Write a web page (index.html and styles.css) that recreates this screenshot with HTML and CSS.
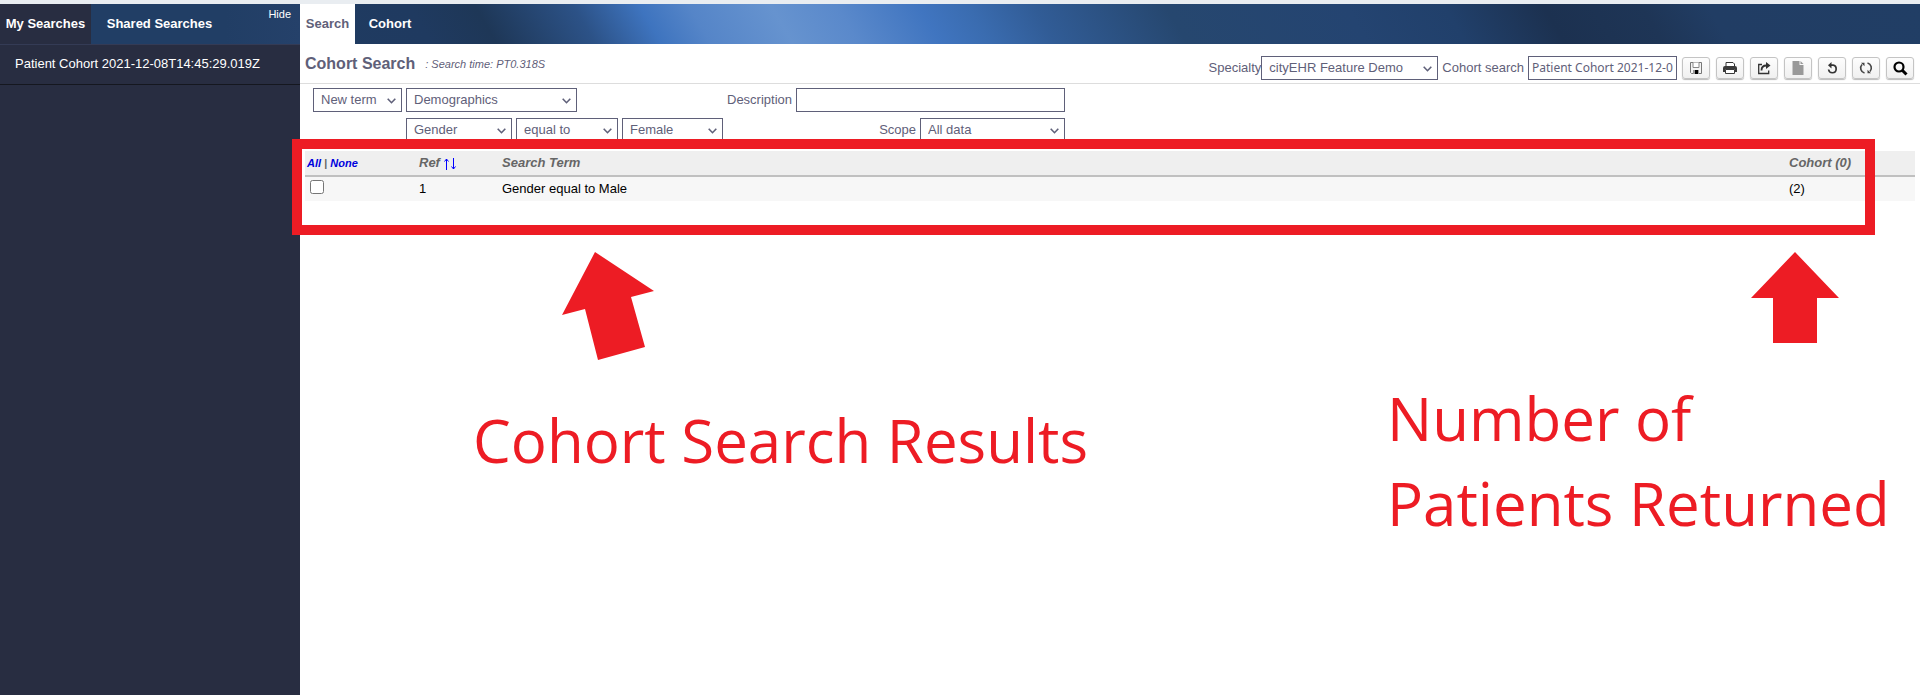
FILE: index.html
```html
<!DOCTYPE html>
<html lang="en">
<head>
<meta charset="utf-8">
<title>Cohort Search</title>
<link rel="stylesheet" href="styles.css">
</head>
<body>
<div class="app">
  <aside class="sidebar">
    <nav class="side-tabs">
      <button class="side-tab active" type="button">My Searches</button>
      <button class="side-tab shared" type="button">Shared Searches</button>
      <button class="hide" type="button">Hide</button>
    </nav>
    <ul class="search-list">
      <li><a href="#">Patient Cohort 2021-12-08T14:45:29.019Z</a></li>
    </ul>
  </aside>
  <main class="main">
    <nav class="main-tabs">
      <button class="main-tab active" type="button">Search</button>
      <button class="main-tab" type="button">Cohort</button>
    </nav>
    <header class="title-bar">
      <h1>Cohort Search</h1>
      <span class="time">: Search time: PT0.318S</span>
      <form class="tools">
        <label for="specialty">Specialty</label>
        <select id="specialty" class="w-specialty"><option>cityEHR Feature Demo</option></select>
        <label class="gap" for="cohort">Cohort search</label>
        <input id="cohort" class="w-cohort" type="text" value="Patient Cohort 2021-12-08T14:45:29.019Z">
        <div class="buttons">
          <button type="button" aria-label="Save"><svg width="14" height="14" viewBox="0 0 14 14"><path d="M1.500 1.500h11v11h-10l-1-1z" fill="#f4f4f4" stroke="#777"/><path d="M4 1.500v5h6v-5" fill="#fff" stroke="#888"/><path d="M4 9h6v4H4z" fill="#999"/><path d="M6 9h3v4H6z" fill="#000"/></svg></button>
          <button type="button" aria-label="Print"><svg width="14" height="14" viewBox="0 0 14 14"><path d="M3 5V1.500h7l1.500 1.500v2" fill="#fff" stroke="#333"/><path d="M2 5h10q2 0 2 2v4h-2V8.500H2V11H0V7q0-2 2-2z" fill="#3a3a3a"/><path d="M2.500 8.500h9v4h-9z" fill="#fff" stroke="#3a3a3a"/></svg></button>
          <button type="button" aria-label="Share"><svg width="14" height="14" viewBox="0 0 14 14"><path d="M5 3.500H1.700v9h10V9.500" fill="none" stroke="#333" stroke-width="1.300"/><path d="M4.500 9.500C4.500 5.500 6.500 4.500 9.500 4.500" fill="none" stroke="#333" stroke-width="1.800"/><path d="M9 1l4.500 3.500L9 8z" fill="#333"/></svg></button>
          <button type="button" aria-label="New document"><svg width="14" height="14" viewBox="0 0 14 14"><path d="M1.500 0h7v4h4v10h-11z" fill="#999"/><path d="M9.500 0l3 3h-3z" fill="#999"/></svg></button>
          <button type="button" aria-label="Undo"><svg width="14" height="14" viewBox="0 0 14 14"><path d="M5.500 4.200H8a3.800 3.800 0 1 1-4.400 4.300" fill="none" stroke="#333" stroke-width="1.700"/><path d="M6.500 1v6.400L3 4.200z" fill="#333"/></svg></button>
          <button type="button" aria-label="Refresh"><svg width="14" height="14" viewBox="0 0 14 14"><path d="M5.500 12A5.200 5.200 0 0 1 3 3.500M8.500 2a5.200 5.200 0 0 1 2.500 8.500" fill="none" stroke="#444" stroke-width="1.600"/><path d="M2 1.800h3.500v3.500zM12 12.200H8.500V8.700z" fill="#444"/></svg></button>
          <button class="find" type="button" aria-label="Search"><svg width="16" height="16" viewBox="0 0 16 16"><circle cx="7" cy="7" r="4.500" fill="none" stroke="#000" stroke-width="2.200"/><path d="M10 10l4.500 4.500" stroke="#000" stroke-width="3"/></svg></button>
        </div>
      </form>
    </header>
    <form class="criteria">
      <div class="terms">
        <select class="w-new" aria-label="Term"><option>New term</option></select>
        <div class="term-rows">
          <select class="w-group" aria-label="Group"><option>Demographics</option></select>
          <div class="term-row">
            <select class="w-field" aria-label="Field"><option>Gender</option></select>
            <select class="w-op" aria-label="Operator"><option>equal to</option></select>
            <select class="w-value" aria-label="Value"><option>Female</option></select>
          </div>
        </div>
      </div>
      <div class="details">
        <div class="detail"><label for="description">Description</label><input id="description" class="w-desc" type="text"></div>
        <div class="detail"><label for="scope">Scope</label><select id="scope" class="w-scope"><option>All data</option></select></div>
      </div>
    </form>
    <table class="results">
      <thead>
        <tr>
          <th class="c-pick"><a href="#">All</a> | <a href="#">None</a></th>
          <th class="c-ref">Ref <a href="#" aria-label="Sort by reference"><svg width="13" height="12" viewBox="0 0 13 12"><path d="M2.500 12V1M.5 3.500l2-2.500 2 2.500M9.500 0v11M7.500 8.500l2 2.500 2-2.500" fill="none" stroke="#00f"/></svg></a></th>
          <th>Search Term</th>
          <th class="c-count">Cohort (0)</th>
        </tr>
      </thead>
      <tbody>
        <tr>
          <td><input type="checkbox" aria-label="Select term 1"></td>
          <td>1</td>
          <td>Gender equal to Male</td>
          <td>(2)</td>
        </tr>
      </tbody>
    </table>
  </main>
</div>
<div class="notes">
  <div class="frame"></div>
  <svg class="arrow arrow-results" width="92" height="108" viewBox="0 0 92 108"><path d="M33 0L92 39 69 45 83 95 36 108 23 57 0 63z" fill="#ed1c24"/></svg>
  <svg class="arrow arrow-count" width="88" height="91" viewBox="0 0 88 91"><path d="M44 0L88 46H66V91H22V46H0z" fill="#ed1c24"/></svg>
  <p class="note note-results">Cohort Search Results</p>
  <p class="note note-count">Number of<br>Patients Returned</p>
</div>
</body>
</html>
```
FILE: styles.css
```css
* { box-sizing: border-box; }

body {
  margin: 0;
  position: relative;
  background: #fff;
  color: #5f6079;
  font: 13px/16px "Liberation Sans", Arial, sans-serif;
}

button, input, select { font: inherit; color: inherit; }

.app {
  display: flex;
  min-height: 100vh;
  border-top: 4px solid #e9edf1;
}

.sidebar { flex: none; width: 300px; background: #282d41; }

.side-tabs {
  display: flex;
  align-items: stretch;
  height: 41px;
  background: linear-gradient(90deg, #213e65, #213e65 75%, #25416a);
  border-bottom: 1px solid #343b55;
}

.side-tab, .main-tab, .hide {
  border: 0;
  background: none;
  color: #fff;
  font-weight: bold;
}

.side-tab { width: 91px; padding: 0; }
.side-tab.active { background: #282d41; }
.side-tab.shared { width: 137px; }

.hide {
  margin-left: auto;
  padding: 4px 9px;
  align-self: flex-start;
  font-size: 11px;
  line-height: 12px;
  font-weight: normal;
}

.search-list { margin: 0; padding: 0; list-style: none; }
.search-list li { border-bottom: 1px solid #15171f; }
.search-list a {
  display: block;
  padding: 11px 15px 12px;
  color: #fff;
  text-decoration: none;
}

.main { flex: 1; min-width: 0; }

.main-tabs {
  display: flex;
  height: 40px;
  background: linear-gradient(60deg,
    #1f3b61 0%, #1f3a60 8%, #1e3757 12%, #2c5287 18%, #3e74bf 22%,
    #5585c8 25%, #6693cf 30%, #5a89cb 34%, #4075c0 39%, #3a6cb0 42%, #315c96 46%,
    #26476f 54%, #244471 65%, #21406b 71%, #1c3150 77%, #1e3556 83%, #213d64 87%, #213e65 100%);
}

.main-tab { width: 70px; padding: 0; }
.main-tab.active { width: 55px; background: #fff; color: #5f6079; }

.title-bar {
  display: flex;
  align-items: center;
  height: 40px;
  padding: 0 6px 0 5px;
  border-bottom: 1px solid #ddd;
}

h1 { margin: 0; font-size: 16px; line-height: 20px; }
.time { margin-left: 10px; font-size: 11px; font-style: italic; }

.tools { display: flex; align-items: center; margin-left: auto; padding-top: 8px; }
.tools .gap { margin: 0 4px; }

select, input[type="text"] {
  height: 24px;
  margin: 0;
  border: 1px solid #5f6079;
  border-radius: 0;
  background: #fff;
}

select {
  appearance: none;
  padding: 0 7px;
  background: #fff url("data:image/svg+xml,%3Csvg xmlns='http://www.w3.org/2000/svg' width='9' height='6'%3E%3Cpath d='M.7.7l3.800 4 3.800-4' fill='none' stroke='%235f6079' stroke-width='1.600'/%3E%3C/svg%3E") no-repeat right 5px top 9px;
}

input[type="text"] { padding: 0 3px; }

.w-specialty { width: 177px; }
.w-cohort { width: 149px; font-family: "Noto Sans", sans-serif; font-size: 12px; }
.w-new { width: 89px; }
.w-group { width: 171px; }
.w-field { width: 106px; }
.w-op { width: 102px; }
.w-value { width: 101px; }
.w-desc { width: 269px; }
.w-scope { width: 145px; }

.buttons { display: flex; gap: 6px; margin-left: 5px; }
.buttons button {
  display: flex;
  align-items: center;
  justify-content: center;
  width: 28px;
  height: 22px;
  padding: 0;
  border: 1px solid #c4c4c4;
  border-radius: 3px;
  background: linear-gradient(#fdfdfd, #f0f0f0);
  box-shadow: 0 1px 1px #bbb;
}

.criteria { display: flex; gap: 4px; padding: 4px 0 0 13px; }
.terms { display: flex; gap: 4px; align-items: flex-start; }
.term-rows, .details { display: flex; flex-direction: column; gap: 6px; }
.term-row { display: flex; gap: 4px; }
.details { width: 338px; }
.detail { display: flex; align-items: center; justify-content: flex-end; gap: 4px; }

.results {
  width: calc(100% - 10px);
  margin: 9px 5px 0;
  border-collapse: collapse;
  table-layout: fixed;
  color: #000;
}

.results th {
  height: 25px;
  padding: 0;
  background: #efefef;
  border-bottom: 2px solid #c0c0c0;
  color: #666;
  font-style: italic;
  text-align: left;
}

.results td { height: 25px; padding: 0; background: #f7f7f7; }
.results a { color: #00d; text-decoration: none; }
.results svg { vertical-align: -3px; }
.results .c-pick { width: 114px; padding-left: 2px; font-size: 11px; }
.results .c-ref { width: 83px; }
.results .c-count { width: 126px; }
.results input { display: block; width: 14px; height: 14px; margin: 0 5px 5px; }

.notes { position: absolute; inset: 0; pointer-events: none; }
.frame {
  position: absolute;
  left: 292px;
  right: 45px;
  top: 139px;
  height: 96px;
  border: 10px solid #ed1c24;
}
.arrow { position: absolute; top: 252px; }
.arrow-results { left: 562px; }
.arrow-count { right: 81px; }
.note {
  position: absolute;
  margin: 0;
  color: #ed1c24;
  font: 60px/85px "Open Sans", "Noto Sans", sans-serif;
  white-space: nowrap;
}
.note-results { left: 473px; top: 398px; }
.note-count { left: 1387px; top: 376px; }
```
